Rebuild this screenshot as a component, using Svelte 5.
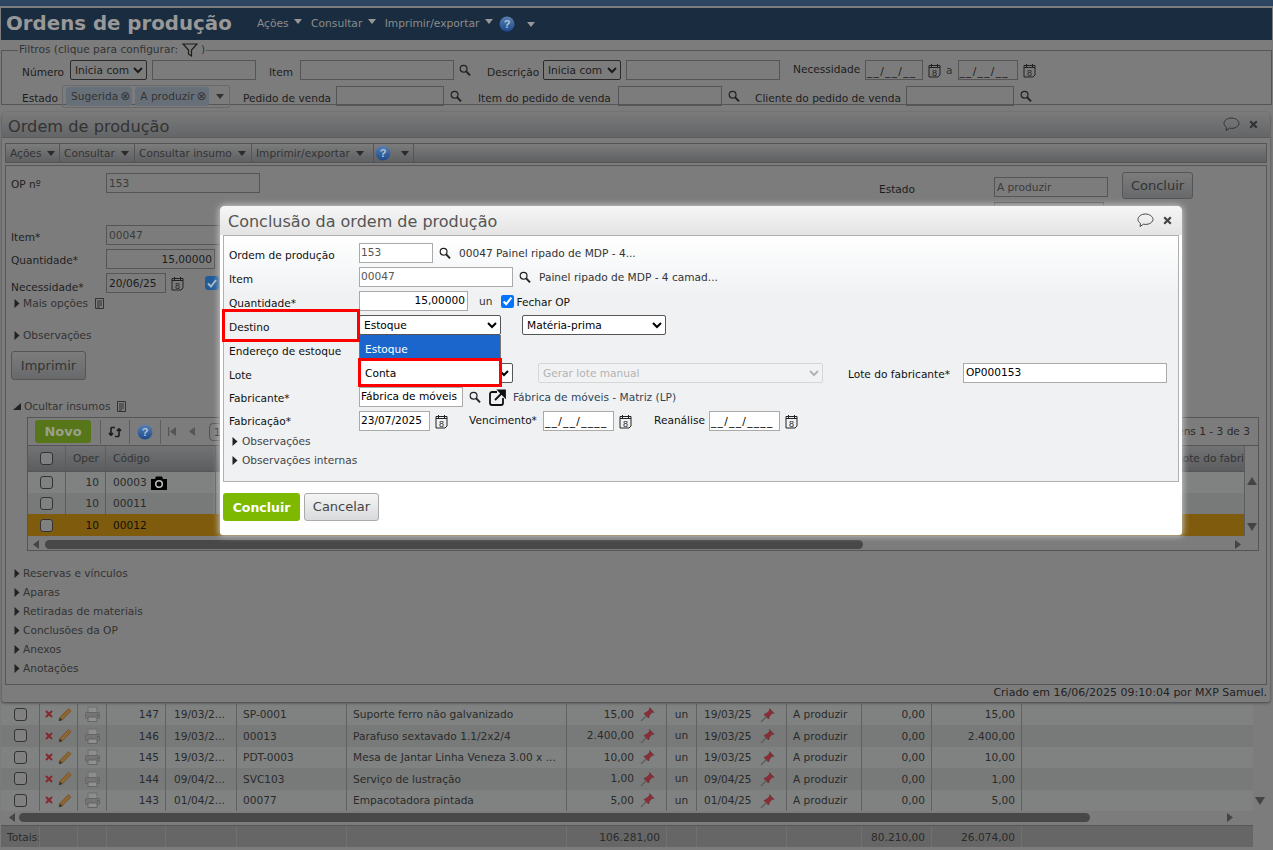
<script>
  const rows = [
    ['147','19/03/2...','SP-0001','Suporte ferro não galvanizado','15,00','19/03/25','0,00','15,00'],
    ['146','19/03/2...','00013','Parafuso sextavado 1.1/2x2/4','2.400,00','19/03/25','0,00','2.400,00'],
    ['145','19/03/2...','PDT-0003','Mesa de Jantar Linha Veneza 3.00 x ...','10,00','19/03/25','0,00','10,00'],
    ['144','09/04/2...','SVC103','Serviço de lustração','1,00','09/04/25','0,00','1,00'],
    ['143','01/04/2...','00077','Empacotadora pintada','5,00','01/04/25','0,00','5,00']
  ];
  const sections = ['Reservas e vínculos','Aparas','Retiradas de materiais','Conclusões da OP','Anexos','Anotações'];
</script>

{#snippet mag()}
  <svg class="ico" width="12" height="13" viewBox="0 0 12 13"><circle cx="4.6" cy="4.8" r="3.4" fill="none" stroke="#222" stroke-width="1.2"/><path d="M7.2 7.4l3.8 4" stroke="#222" stroke-width="2"/></svg>
{/snippet}
{#snippet cal()}
  <svg class="ico" width="13" height="15" viewBox="0 0 13 15"><path d="M1 2.500h11v9.500l-2 2H1z" fill="none" stroke="#222"/><path d="M3.500 1v3M9.500 1v3M1 4.500h11" stroke="#222"/><text x="6.500" y="12.700" font-size="9" text-anchor="middle" fill="#222" font-family="Liberation Sans">8</text></svg>
{/snippet}
{#snippet help()}
  <svg class="ico" width="16" height="16" viewBox="0 0 16 16"><defs><linearGradient id="hg" x1="0" y1="0" x2="0" y2="1"><stop offset="0" stop-color="#5a80b0"/><stop offset="1" stop-color="#1e4a8c"/></linearGradient></defs><circle cx="8" cy="8" r="7.5" fill="url(#hg)"/><text x="8" y="12" font-size="11" font-weight="700" text-anchor="middle" fill="#b5c4d8" font-family="Liberation Sans">?</text></svg>
{/snippet}
{#snippet caret()}
  <i class="caret"></i>
{/snippet}
{#snippet tri()}
  <svg class="ico tri" width="6" height="9" viewBox="0 0 6 9"><path d="M0.5 0l5 4.500-5 4.500z" fill="#222"/></svg>
{/snippet}
{#snippet doc()}
  <svg class="ico" width="9" height="11" viewBox="0 0 9 11"><path d="M.5.5h8v10h-8zM2 3h5M2 5h5M2 7h5M2 9h3" fill="none" stroke="#333"/></svg>
{/snippet}
{#snippet bubble()}
  <svg class="ico" width="17" height="15" viewBox="0 0 17 15"><path d="M8.500 1C4.400 1 1 3.400 1 6.400c0 1.600 1 3 2.500 4L3 13.500l3.500-2.300c.6.1 1.300.2 2 .2 4.100 0 7.500-2.300 7.500-5S12.600 1 8.500 1z" fill="none" stroke="currentColor"/></svg>
{/snippet}
{#snippet closex()}
  <svg class="ico" width="9" height="9" viewBox="0 0 9 9"><path d="M1.200 1.200l6.600 6.600M7.800 1.200L1.200 7.800" stroke="currentColor" stroke-width="2.200"/></svg>
{/snippet}
{#snippet pin()}
  <svg class="ico" width="16" height="16" viewBox="0 0 16 16"><path d="M1 15l5-5" stroke="#5d5d5d" stroke-width="1.300"/><path d="M4 7.500l4.500 4.500 1-3 3-3 1.500.5L9.500 1.500l.5 1.500-3 3z" fill="#8c2d36" stroke="#60272c" stroke-width=".6"/></svg>
{/snippet}
{#snippet printer()}
  <svg class="ico" width="15" height="16" viewBox="0 0 15 16"><rect x="3" y="1" width="9" height="6" fill="#8d8d8d" stroke="#6e6e6e"/><rect x=".5" y="6.500" width="14" height="6" rx="1" fill="#757575" stroke="#656565"/><rect x="3" y="11" width="9" height="4.500" fill="#909090" stroke="#656565"/><rect x="12" y="8" width="1.500" height="1.500" fill="#3f7041"/></svg>
{/snippet}
{#snippet redx()}
  <svg class="ico" width="8" height="8" viewBox="0 0 8 8"><path d="M1 1l6 6M7 1L1 7" stroke="#85282e" stroke-width="2"/></svg>
{/snippet}
{#snippet pencil()}
  <svg class="ico" width="14" height="15" viewBox="0 0 14 15"><path d="M1 14l.8-3.500L10.500 1.500l2.500 2.500-8.800 9z" fill="#8d6631" stroke="#714e23" stroke-width=".7"/><path d="M1 14l.8-3.500 2.500 2.500z" fill="#333"/></svg>
{/snippet}

<div class="page">
  <div class="stripe"></div>
  <header class="appbar">
    <h1>Ordens de produção</h1>
    <nav class="appmenu">
      <span>Ações {@render caret()}</span>
      <span>Consultar {@render caret()}</span>
      <span>Imprimir/exportar {@render caret()}</span>
      {@render help()}
      {@render caret()}
    </nav>
  </header>

  <fieldset class="filters">
    <legend>Filtros (clique para configurar:
      <svg class="ico" width="16" height="14" viewBox="0 0 16 14"><path d="M1 1h14L9.500 7v6l-3-2V7z" fill="none" stroke="#1c1c1c" stroke-width="1.200"/></svg> )</legend>
    <div class="frow1">
      <label class="l1">Número</label>
      <select class="s1"><option>Inicia com</option></select>
      <input class="i w103" />
      <label class="l2">Item</label>
      <input class="i w154" />
      {@render mag()}
      <label class="l3">Descrição</label>
      <select class="s2"><option>Inicia com</option></select>
      <input class="i w154" />
      <label class="l4">Necessidade</label>
      <span class="i mask w57">__/__/__</span>
      {@render cal()}
      <span class="a">a</span>
      <span class="i mask w60">__/__/__</span>
      {@render cal()}
    </div>
    <div class="frow2">
      <label class="l1b">Estado</label>
      <div class="tags">
        <span class="tag">Sugerida<b>⊗</b></span>
        <span class="tag">A produzir<b>⊗</b></span>
        <i class="caret dark"></i>
      </div>
      <label class="l5">Pedido de venda</label>
      <input class="i w108" />
      {@render mag()}
      <label class="l6">Item do pedido de venda</label>
      <input class="i w103" />
      {@render mag()}
      <label class="l7">Cliente do pedido de venda</label>
      <input class="i w108" />
      {@render mag()}
    </div>
  </fieldset>

  <section class="list">
    <div class="listbody">
      {#each rows as r, i}
        <div class="lrow" class:alt={i % 2 === 1}>
          <span class="c ctr"><input type="checkbox" class="cb" /></span>
          <span class="c ctr gap">{@render redx()}{@render pencil()}</span>
          <span class="c ctr">{@render printer()}</span>
          <span class="c rt">{r[0]}</span>
          <span class="c cdate">{r[1]}</span>
          <span class="c">{r[2]}</span>
          <span class="c">{r[3]}</span>
          <span class="c rtpin"><em>{r[4]}</em>{@render pin()}</span>
          <span class="c ctr">un</span>
          <span class="c btw"><em>{r[5]}</em>{@render pin()}</span>
          <span class="c">A produzir</span>
          <span class="c rt">{r[6]}</span>
          <span class="c rt">{r[7]}</span>
          <span class="c"></span>
        </div>
      {/each}
      <svg class="downarr" width="10" height="8" viewBox="0 0 10 8"><path d="M0 0h10L5 8z" fill="#444"/></svg>
    </div>
    <div class="hscroll">
      <svg width="6" height="9" viewBox="0 0 6 9"><path d="M6 0L0 4.500 6 9z" fill="#444"/></svg>
      <div class="thumb t1"></div>
      <svg class="hr" width="6" height="9" viewBox="0 0 6 9"><path d="M0 0l6 4.500L0 9z" fill="#444"/></svg>
    </div>
    <div class="totals">
      <span class="c">Totais:</span><span class="c"></span><span class="c"></span><span class="c"></span><span class="c"></span><span class="c"></span><span class="c"></span>
      <span class="c rt">106.281,00</span>
      <span class="c"></span><span class="c"></span><span class="c"></span>
      <span class="c rt">80.210,00</span>
      <span class="c rt">26.074,00</span>
      <span class="c"></span>
    </div>
  </section>

  <div class="win">
    <div class="winhead">
      <h2>Ordem de produção</h2>
      <span class="winicons">{@render bubble()}{@render closex()}</span>
    </div>
    <div class="wintools">
      <span class="tb t54">Ações {@render caret()}</span>
      <span class="tb t75">Consultar {@render caret()}</span>
      <span class="tb t117">Consultar insumo {@render caret()}</span>
      <span class="tb t122">Imprimir/exportar {@render caret()}</span>
      <span class="tb t40">{@render help()} <span class="ml">{@render caret()}</span></span>
    </div>
    <div class="wincontent">
      <div class="ophead">
        <div class="row lab95"><label>OP nº</label><span class="i ro w154">153</span></div>
        <div class="opright">
          <div class="est"><label>Estado</label><span class="i ro e1">A produzir</span><span class="btn b1">Concluir</span></div>
          <span class="i ro e2"></span>
        </div>
      </div>
      <div class="row lab95"><label class="low1">Item*</label><span class="i ro w200">00047</span></div>
      <div class="row lab95"><label>Quantidade*</label><span class="i num w109">15,00000</span></div>
      <div class="row lab95 last"><label class="low">Necessidade*</label><span class="i w60">20/06/25</span><span class="calm">{@render cal()}</span>
        <svg class="ico ck2" width="14" height="14" viewBox="0 0 14 14"><rect width="14" height="14" rx="3" fill="#1f5c99"/><path d="M3 7.500l3 3 5-6.500" fill="none" stroke="#a9b8c8" stroke-width="2"/></svg></div>
      <div class="coll first">{@render tri()}<span>Mais opções</span><span class="dm">{@render doc()}</span></div>
      <div class="coll second">{@render tri()}<span>Observações</span></div>
      <span class="btn imp">Imprimir</span>
      <div class="coll third"><svg class="ico" width="8" height="7" viewBox="0 0 8 7"><path d="M8 0v7H0z" fill="#222"/></svg><span>Ocultar insumos</span><span class="dm">{@render doc()}</span></div>

      <div class="grid">
        <div class="gtools">
          <span class="novo">Novo</span>
          <span class="gsep first"></span>
          <svg class="ico gi" width="14" height="14" viewBox="0 0 14 14"><path d="M3 2.500v8M3 10.500L1 8M3 10.500L5 8M11 11.500v-8M11 3.500L9 6M11 3.500L13 6M3 2.500h4M11 11.500H7" fill="none" stroke="#1c1c1c" stroke-width="1.600"/></svg>
          <span class="gsep"></span>
          <span class="gi2">{@render help()}</span>
          <span class="gsep"></span>
          <svg class="ico pg" width="9" height="9" viewBox="0 0 9 9"><path d="M1 0v9h1.200V0zM9 0v9L3 4.500z" fill="#555"/></svg>
          <svg class="ico pg2" width="6" height="9" viewBox="0 0 6 9"><path d="M6 0v9L0 4.500z" fill="#555"/></svg>
          <span class="pinput">1</span>
          <span class="count">Itens 1 - 3 de 3</span>
        </div>
        <div class="gbody">
          <div class="gmain">
            <div class="ghead">
              <span class="g ctr"><input type="checkbox" class="cb" /></span>
              <span class="g">Oper</span>
              <span class="g">Código</span>
              <span class="g"></span>
              <span class="g">Lote do fabricante</span>
            </div>
            <div class="grow"><span class="g ctr"><input type="checkbox" class="cb" /></span><span class="g rt">10</span><span class="g cam">00003
              <svg class="ico" width="16" height="14" viewBox="0 0 16 14"><path d="M0 3h4l1-2.500h6L12 3h4v11H0z" fill="#000"/><circle cx="8" cy="8" r="3.300" fill="none" stroke="#bbb" stroke-width="1.600"/></svg></span><span class="g"></span><span class="g"></span></div>
            <div class="grow alt2"><span class="g ctr"><input type="checkbox" class="cb" /></span><span class="g rt">10</span><span class="g">00011</span><span class="g"></span><span class="g"></span></div>
            <div class="grow sel"><span class="g ctr"><input type="checkbox" class="cb" /></span><span class="g rt">10</span><span class="g">00012</span><span class="g"></span><span class="g"></span></div>
          </div>
          <div class="vbar">
            <svg width="10" height="8" viewBox="0 0 10 8"><path d="M0 8h10L5 0z" fill="#444"/></svg>
            <svg width="10" height="8" viewBox="0 0 10 8"><path d="M0 0h10L5 8z" fill="#444"/></svg>
          </div>
        </div>
        <div class="ghscroll">
          <svg width="6" height="9" viewBox="0 0 6 9"><path d="M6 0L0 4.500 6 9z" fill="#444"/></svg>
          <div class="thumb t2"></div>
          <svg class="hr" width="6" height="9" viewBox="0 0 6 9"><path d="M0 0l6 4.500L0 9z" fill="#444"/></svg>
        </div>
      </div>

      <div class="sections">
        {#each sections as s}
          <div class="sec">{@render tri()}<span>{s}</span></div>
        {/each}
      </div>
    </div>
    <div class="winfoot">Criado em 16/06/2025 09:10:04 por MXP Samuel.</div>
  </div>

  <div class="dialog">
    <div class="dhead">
      <h3>Conclusão da ordem de produção</h3>
      <span class="dicons">{@render bubble()}{@render closex()}</span>
    </div>
    <div class="dbox">
      <div class="r"><label>Ordem de produção</label><span class="fi ro2 w74">153</span><span class="m6">{@render mag()}</span><span class="desc">00047 Painel ripado de MDP - 4...</span></div>
      <div class="r"><label>Item</label><span class="fi ro2 w154b">00047</span><span class="m6">{@render mag()}</span><span class="desc">Painel ripado de MDP - 4 camad...</span></div>
      <div class="r"><label>Quantidade*</label><span class="fi num w109">15,00000</span><span class="un">un</span><input type="checkbox" checked class="chk ck3" /><span class="fechar">Fechar OP</span></div>
      <div class="r"><label>Destino</label><select class="ds w142"><option>Estoque</option></select><select class="ds w144"><option>Matéria-prima</option></select></div>
      <div class="r"><label>Endereço de estoque</label></div>
      <div class="r"><label>Lote</label><select class="ds w154b"><option></option></select><select class="ds w285" disabled><option>Gerar lote manual</option></select><label class="lf">Lote do fabricante*</label><span class="fi w204">OP000153</span></div>
      <div class="r"><label class="up2">Fabricante*</label><span class="fi w104">Fábrica de móveis</span><span class="m6">{@render mag()}</span>
        <svg class="ico ext" width="17" height="17" viewBox="0 0 17 17"><path d="M8 3H3a2 2 0 0 0-2 2v9a2 2 0 0 0 2 2h9a2 2 0 0 0 2-2V9" fill="none" stroke="#111" stroke-width="1.800"/><path d="M6 11l8-8M9.500 1.500H16V8z" stroke="#111" stroke-width="1.800" fill="#111"/></svg>
        <span class="desc2">Fábrica de móveis - Matriz (LP)</span></div>
      <div class="r tight"><label class="up4">Fabricação*</label><span class="fi w71">23/07/2025</span><span class="m5">{@render cal()}</span><span class="vl">Vencimento*</span><span class="fi w71 mask2">__/__/____</span><span class="m5">{@render cal()}</span><span class="vl2">Reanálise</span><span class="fi w71 mask2">__/__/____</span><span class="m5">{@render cal()}</span></div>
      <div class="dcoll">{@render tri()}<span>Observações</span></div>
      <div class="dcoll">{@render tri()}<span>Observações internas</span></div>
    </div>
    <div class="dfoot">
      <span class="ok">Concluir</span>
      <span class="cancel">Cancelar</span>
    </div>
    <div class="drop">
      <div class="op on">Estoque</div>
      <div class="op">Conta</div>
    </div>
    <div class="mark m1"></div>
    <div class="mark m2"></div>
  </div>
</div>

<style>
  :global(body) { margin: 0; }
  .page { position: relative; width: 1273px; height: 850px; overflow: hidden; background: #7c7c7c; display: flex; flex-direction: column; font: 10.6px/1.2 "DejaVu Sans", sans-serif; color: #1c1c1c; }
  .page * { box-sizing: border-box; }
  label { display: block; }
  .ico { display: inline-block; vertical-align: middle; flex: none; }
  .caret { display: inline-block; width: 0; height: 0; border: 4px solid transparent; border-top: 5px solid #989898; border-bottom: 0; margin-left: 2px; vertical-align: 3px; }
  .caret.dark { border-top-color: #333; margin-left: 4px; }

  .stripe { height: 6px; background: #2c4560; flex: none; }
  .appbar { flex: none; height: 32px; margin: 2px 1px 0; background: #1a2c3f; display: flex; align-items: center; padding-left: 5px; color: #989898; }
  .appbar h1 { margin: 0; font-size: 19.8px; font-weight: 700; width: 251px; }
  .appmenu { display: flex; align-items: center; gap: 9px; font-size: 10.7px; color: #8c8c8c; }
  .appmenu span { white-space: nowrap; }
  .appmenu .ico { margin: 0 1px 0 -3px; }

  .filters { flex: none; margin: 3px 1px 0; padding: 0; height: 62px; border: 1px solid #555; position: relative; }
  .filters legend { margin-left: 16px; padding: 0 1px; font-size: 10.6px; color: #333; height: 14px; line-height: 13px; }
  .frow1, .frow2 { display: flex; align-items: center; height: 20px; }
  .frow1 { margin: 3px 0 0 20px; }
  .frow2 { margin: 6px 0 0 20px; }
  .i { display: inline-block; height: 20px; border: 1px solid #555; background: transparent; padding: 1px 2px; font: inherit; color: #1c1c1c; border-radius: 0; line-height: 16px; flex: none; }
  .filters label { padding-top: 4px; }
  .w103 { width: 104px; } .w154 { width: 154px; } .w108 { width: 108px; } .w57 { width: 58px; } .w60 { width: 60px; } .w200 { width: 200px; } .w109 { width: 109px; }
  .mask { padding: 2px 0 0 1px; letter-spacing: 1.300px; }
  .l1 { width: 48px; } .l1b { width: 40px; }
  .s1 { width: 77px; height: 20px; margin-right: 5px; }
  .s1, .s2 { background: transparent; font: inherit; border: 1px solid #2a2a2a; border-radius: 2px; color: #1c1c1c; }
  .s2 { width: 78px; height: 20px; margin-right: 5px; }
  .l2 { margin-left: 13px; width: 31px; }
  .l3 { margin-left: 16px; width: 56px; }
  .filters .l4 { margin-left: 13px; width: 72px; padding-top: 0; margin-top: -1px; }
  .frow1 .ico { margin-left: 5px; }
  .a { margin: 0 5px; color: #333; }
  .tags { width: 168px; height: 23px; border: 1px solid #696969; border-radius: 2px; display: flex; align-items: center; padding-left: 3px; gap: 3px; flex: none; }
  .tag { background: #677079; border-radius: 3px; height: 19px; padding: 0 2px 0 5px; line-height: 17px; color: #333; display: inline-flex; align-items: center; white-space: nowrap; }
  .tag b { font-weight: 400; font-size: 12px; margin-left: 2px; }
  .l5 { margin-left: 13px; width: 93px; }
  .l6 { margin-left: 16px; width: 140px; }
  .l7 { margin-left: 15px; width: 151px; }
  .frow2 .ico { margin-left: 6px; flex: none; }
  .frow2 .tags .caret { margin-left: 4px; }

  .list { flex: 1; display: flex; flex-direction: column; justify-content: flex-end; min-height: 0; margin: 0 1px; padding-bottom: 3px; position: relative; color: #2a2a2a; }
  .listbody { position: relative; }
  .lrow, .totals { display: grid; grid-template-columns: 39px 38px 29px 59px 71px 110px 220px 100px 30px 90px 75px 70px 90px 1fr; width: 1252px; }
  .lrow { height: 21.5px; background: #7f8281; }
  .lrow.alt { background: #787a79; }
  .c { border-right: 1px solid #616161; padding: 1px 6px 0; display: flex; align-items: center; white-space: nowrap; overflow: hidden; }
  .c:last-child { border-right: 0; }
  .c em { font-style: normal; }
  .cdate { padding-left: 8px; }
  .ctr { justify-content: center; padding: 0; }
  .gap { gap: 5px; }
  .rt { justify-content: flex-end; }
  .rtpin { justify-content: flex-end; gap: 6px; padding: 0 10px 0 0; }
  .btw { justify-content: space-between; padding-right: 10px; padding-left: 7px; }
  .chk { width: 13px; height: 13px; margin: 0; flex: none; }
  .cb { appearance: none; width: 13px; height: 13px; margin: 0; flex: none; border: 1px solid #333; border-radius: 3px; background: #808080; }
  .downarr { position: absolute; top: 93px; left: 1254px; }
  .hscroll { height: 11px; display: flex; align-items: center; padding: 0 20px 0 8px; gap: 4px; margin-top: 1px; width: 1252px; }
  .thumb { height: 9px; border-radius: 5px; background: #484848; }
  .t1 { width: 1071px; }
  .hr { margin-left: auto; }
  .totals { height: 22px; background: #666; margin-top: 2px; border-top: 1px solid #555; }
  .totals .c { border-right-color: #707070; }

  .win { position: absolute; left: 2px; top: 112px; width: 1268px; height: 590px; background: #7c7c7c; border-radius: 5px 5px 3px 3px; box-shadow: 0 1px 3px #444; padding: 0 3px; display: flex; flex-direction: column; }
  .winhead { height: 26px; flex: none; margin: 0 -3px; background: linear-gradient(#7b7b7b, #636567); border-bottom: 1px solid #5d5d5d; border-radius: 5px 5px 0 0; display: flex; align-items: center; justify-content: space-between; padding: 0 12px 0 6px; }
  .winhead h2 { margin: 0; font-size: 16.2px; font-weight: 400; color: #333; padding-top: 5px; }
  .winicons { display: flex; align-items: center; gap: 9px; color: #333; }
  .dicons { display: flex; align-items: center; gap: 9px; color: #444; }
  .wintools { height: 20px; margin-top: 5px; flex: none; display: flex; border: 1px solid #555; background: linear-gradient(#7c7c7c, #5e6062); }
  .tb { display: flex; align-items: center; padding-left: 4px; border-right: 1px solid #555; white-space: nowrap; gap: 3px; color: #333; flex: none; }
  .t54 { width: 54px; } .t75 { width: 75px; } .t117 { width: 117px; } .t122 { width: 122px; } .t40 { width: 40px; padding-left: 1px; }
  .tb .caret { border-top-color: #2a2a2a; margin-left: 3px; vertical-align: 2px; }
  .ml { margin-left: 4px; display: inline-flex; }
  .wincontent { flex: none; height: 520px; margin-top: 2px; border: 1px solid #555; padding: 7px 0 0 5px; }
  .ophead { display: flex; height: 52px; }
  .row { display: flex; align-items: center; height: 20px; margin-bottom: 4px; }
  .lab95 label { width: 95px; color: #222; padding-top: 2px; }
  .lab95 .low { padding-top: 8px; }
  .lab95 .low1 { padding-top: 4px; }
  .ro { color: #3b3b3b; }
  .num { text-align: right; }
  .opright { margin-left: auto; width: 320px; margin-right: 67px; margin-top: -1px; }
  .est { display: flex; align-items: flex-start; }
  .est label { width: 115px; padding-top: 11px; }
  .e1 { width: 114px; margin-top: 5px; }
  .e2 { width: 110px; margin-left: 115px; margin-top: 3px; }
  .btn { display: inline-flex; align-items: center; justify-content: center; border: 1px solid #555; border-radius: 3px; background: linear-gradient(#7c7c7c, #67696b); color: #333; font-size: 13px; }
  .b1 { width: 71px; height: 27px; margin-left: 14px; }
  .calm { margin-left: 5px; }
  .ck2 { margin-left: 21px; }
  .row.last { margin-bottom: 2px; }
  .coll { display: flex; align-items: center; height: 16px; color: #333; padding-left: 3px; gap: 3px; }
  .coll.first { margin-bottom: 16px; }
  .coll.second { margin-bottom: 8px; }
  .dm { margin-left: 4px; display: inline-flex; }
  .imp { width: 75px; height: 29px; }
  .coll.third { margin-top: 18px; padding-left: 2px; gap: 3px; }
  .grid { margin: 3px 0 0 16px; width: 1232px; height: 134px; border: 1px solid #555; display: flex; flex-direction: column; }
  .gtools { height: 28px; flex: none; display: flex; align-items: center; padding-left: 7px; border-bottom: 1px solid #555; position: relative; }
  .novo { width: 56px; height: 23px; background: #577519; border-radius: 3px; color: #9aa08a; font-weight: 700; font-size: 13px; display: flex; align-items: center; justify-content: center; }
  .gsep { width: 1px; height: 24px; background: #5e5e5e; }
  .gsep.first { margin-left: 9px; }
  .gi { margin: 0 7px; }
  .gi2 { margin: 0 7px; display: inline-flex; }
  .pg { margin-left: 6px; }
  .pg2 { margin-left: 13px; }
  .pinput { margin-left: 14px; width: 30px; height: 18px; border: 1px solid #555; border-radius: 4px; padding: 2px 4px; }
  .count { margin-left: auto; padding-right: 8px; color: #2a2a2a; }
  .gbody { display: flex; height: 91px; flex: none; }
  .gmain { width: 1217px; flex: none; }
  .ghead, .grow { display: grid; grid-template-columns: 38px 40px 110px 954px 1fr; }
  .ghead { height: 26px; background: linear-gradient(#717375, #5b5d5f); border-bottom: 1px solid #555; color: #333; }
  .g { border-right: 1px solid #5d5d5d; display: flex; align-items: center; padding: 0 7px; white-space: nowrap; overflow: hidden; min-width: 0; }
  .g.ctr { padding: 0; justify-content: center; }
  .g.rt { justify-content: flex-end; padding-right: 6px; }
  .cam { gap: 4px; }
  .grow { height: 21px; background: #7f8281; color: #2a2a2a; }
  .grow.alt2 { background: #787a79; }
  .grow.sel { height: 22px; background: #7f5c0d; color: #111; }
  .vbar { flex: 1; display: flex; flex-direction: column; justify-content: space-between; align-items: center; padding: 31px 0 6px; }
  .ghscroll { flex: none; height: 14px; display: flex; align-items: center; padding: 0 17px 0 5px; gap: 6px; }
  .t2 { width: 818px; }
  .sections { margin-top: 13px; padding-left: 3px; }
  .sec { height: 19px; display: flex; align-items: center; gap: 3px; color: #333; }
  .winfoot { flex: 1; display: flex; align-items: center; justify-content: flex-end; padding-bottom: 2px; color: #222; font-size: 11px; }

  .dialog { position: absolute; left: 220px; top: 206px; width: 962px; height: 329px; background: #fff; border-radius: 5px 5px 3px 3px; box-shadow: 0 0 6px 1px #c8c8c8; color: #000; }
  .dhead { height: 29px; padding: 0 10px 0 8px; display: flex; align-items: center; justify-content: space-between; background: linear-gradient(#f6f6f6, #e4e4e4); border-radius: 5px 5px 0 0; }
  .dhead h3 { margin: 0; font-size: 16px; font-weight: 400; color: #555; padding-top: 2px; }
  .dbox { height: 247px; margin: 0 3px; border: 1px solid #b0b0b0; padding: 7px 0 0 5px; background: linear-gradient(#fff, #eff1f3 60px); }
  .r { display: flex; align-items: center; height: 20px; margin-bottom: 4px; }
  .r.tight { margin-bottom: 1px; }
  .r > label { width: 130px; padding-top: 5px; flex: none; color: #111; }
  .r > label.up2 { padding-top: 3px; }
  .r > label.up4 { padding-top: 0; }
  .r > label.lf { width: 115px; margin-left: 25px; padding-top: 3px; }
  .fi { display: inline-block; height: 20px; border: 1px solid #aaa; background: #fff; padding: 1px 2px 1px 1px; line-height: 15px; flex: none; white-space: nowrap; overflow: hidden; color: #000; }
  .w204 { padding-left: 2px; }
  .ro2 { color: #555; }
  .w74 { width: 74px; } .w154b { width: 154px; } .w204 { width: 204px; } .w104 { width: 104px; } .w71 { width: 71px; }
  .m6 { margin-left: 6px; display: inline-flex; }
  .m5 { margin-left: 5px; display: inline-flex; }
  .desc { margin-left: 8px; color: #333; white-space: nowrap; }
  .desc2 { margin-left: 7px; color: #345; white-space: nowrap; }
  .ext { margin-left: 8px; }
  .un { margin-left: 11px; color: #333; }
  .ck3 { margin-left: 9px; }
  .fechar { margin-left: 2px; padding-top: 2px; color: #111; }
  .ds { height: 20px; font: inherit; background: #fff; border: 1px solid #555; border-radius: 2px; color: #000; flex: none; }
  .w142 { width: 142px; }
  .w144 { width: 144px; margin-left: 21px; }
  .w285 { width: 285px; margin-left: 25px; color: #999; border-color: #ccc; background: #f3f3f3; }
  .vl { margin-left: 21px; width: 74px; color: #111; padding-bottom: 2px; }
  .vl2 { margin-left: 22px; width: 55px; color: #111; padding-bottom: 2px; }
  .mask2 { padding-top: 2px; letter-spacing: 1.300px; }
  .dcoll { height: 19px; display: flex; align-items: center; gap: 4px; color: #444; padding-left: 3px; }
  .dfoot { display: flex; gap: 4px; margin: 11px 0 0 3px; }
  .ok { width: 77px; height: 28px; padding-top: 1px; background: #7db900; color: #fff; font-weight: 700; font-size: 12.5px; border-radius: 3px; display: flex; align-items: center; justify-content: center; }
  .cancel { width: 75px; height: 28px; border: 1px solid #aaa; border-radius: 3px; background: linear-gradient(#f5f5f5, #d8dadc); color: #444; font-size: 13px; display: flex; align-items: center; justify-content: center; }
  .drop { position: absolute; left: 139px; top: 129px; width: 142px; height: 50px; background: #fff; border: 1px solid #777; border-top: 0; }
  .op { height: 24px; display: flex; align-items: center; padding: 2px 0 0 5px; }
  .op.on { height: 25px; padding-top: 4px; background: #1a66cc; color: #fff; }
  .mark { position: absolute; border: 3px solid #f00; }
  .m1 { left: 2px; top: 103px; width: 138px; height: 33px; }
  .m2 { left: 138px; top: 152px; width: 144px; height: 29px; }
</style>
